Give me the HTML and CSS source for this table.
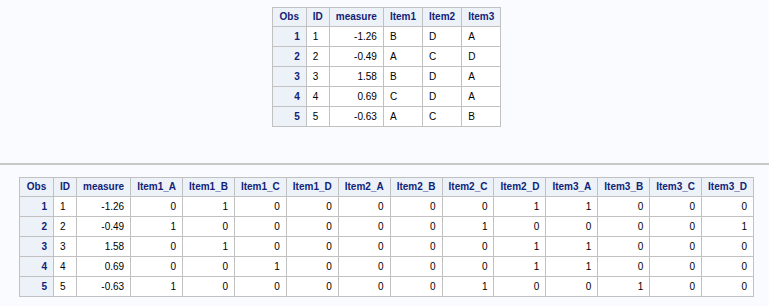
FILE: index.html
```html
<!DOCTYPE html>
<html>
<head>
<meta charset="utf-8">
<link rel="stylesheet" href="styles.css">
</head>
<body>
<div class="page">
  <section class="block block-top">
    <table class="tbl">
      <thead>
        <tr><th class="obs-h">Obs</th><th>ID</th><th>measure</th><th>Item1</th><th>Item2</th><th>Item3</th></tr>
      </thead>
      <tbody>
        <tr><th class="obs">1</th><td>1</td><td class="r">-1.26</td><td>B</td><td>D</td><td>A</td></tr>
        <tr><th class="obs">2</th><td>2</td><td class="r">-0.49</td><td>A</td><td>C</td><td>D</td></tr>
        <tr><th class="obs">3</th><td>3</td><td class="r">1.58</td><td>B</td><td>D</td><td>A</td></tr>
        <tr><th class="obs">4</th><td>4</td><td class="r">0.69</td><td>C</td><td>D</td><td>A</td></tr>
        <tr><th class="obs">5</th><td>5</td><td class="r">-0.63</td><td>A</td><td>C</td><td>B</td></tr>
      </tbody>
    </table>
  </section>
  <hr class="sep">
  <section class="block block-bottom">
    <table class="tbl">
      <thead>
        <tr><th class="obs-h">Obs</th><th>ID</th><th>measure</th><th>Item1_A</th><th>Item1_B</th><th>Item1_C</th><th>Item1_D</th><th>Item2_A</th><th>Item2_B</th><th>Item2_C</th><th>Item2_D</th><th>Item3_A</th><th>Item3_B</th><th>Item3_C</th><th>Item3_D</th></tr>
      </thead>
      <tbody>
        <tr><th class="obs">1</th><td>1</td><td class="r">-1.26</td><td class="r">0</td><td class="r">1</td><td class="r">0</td><td class="r">0</td><td class="r">0</td><td class="r">0</td><td class="r">0</td><td class="r">1</td><td class="r">1</td><td class="r">0</td><td class="r">0</td><td class="r">0</td></tr>
        <tr><th class="obs">2</th><td>2</td><td class="r">-0.49</td><td class="r">1</td><td class="r">0</td><td class="r">0</td><td class="r">0</td><td class="r">0</td><td class="r">0</td><td class="r">1</td><td class="r">0</td><td class="r">0</td><td class="r">0</td><td class="r">0</td><td class="r">1</td></tr>
        <tr><th class="obs">3</th><td>3</td><td class="r">1.58</td><td class="r">0</td><td class="r">1</td><td class="r">0</td><td class="r">0</td><td class="r">0</td><td class="r">0</td><td class="r">0</td><td class="r">1</td><td class="r">1</td><td class="r">0</td><td class="r">0</td><td class="r">0</td></tr>
        <tr><th class="obs">4</th><td>4</td><td class="r">0.69</td><td class="r">0</td><td class="r">0</td><td class="r">1</td><td class="r">0</td><td class="r">0</td><td class="r">0</td><td class="r">0</td><td class="r">1</td><td class="r">1</td><td class="r">0</td><td class="r">0</td><td class="r">0</td></tr>
        <tr><th class="obs">5</th><td>5</td><td class="r">-0.63</td><td class="r">1</td><td class="r">0</td><td class="r">0</td><td class="r">0</td><td class="r">0</td><td class="r">0</td><td class="r">1</td><td class="r">0</td><td class="r">0</td><td class="r">1</td><td class="r">0</td><td class="r">0</td></tr>
      </tbody>
    </table>
  </section>
</div>
</body>
</html>
```

FILE: styles.css
```css
html, body {
  margin: 0;
  padding: 0;
  background: #fafbfe;
}

.page {
  padding: 7px 8px 0 12px;
  font-family: "Liberation Sans", Arial, sans-serif;
  font-size: 10px;
}

.block {
  display: flex;
  justify-content: center;
}

.block-top {
  padding-bottom: 36px;
}

.block-bottom {
  padding-top: 12px;
}

.sep {
  border: 0;
  border-top: 2px solid #c8c8c8;
  margin: 0 -8px 0 -12px;
  height: 0;
}

.tbl {
  border-collapse: collapse;
  border: 1px solid #c1c1c1;
  background: #ffffff;
}

.tbl th,
.tbl td {
  border: 1px solid #c1c1c1;
  padding: 4px 6px 3px 6px;
  line-height: 12px;
  white-space: nowrap;
  color: #000000;
  text-align: left;
  font-weight: normal;
}

.tbl thead th {
  background: #edf2f9;
  color: #112277;
  font-weight: bold;
  text-align: center;
  padding: 3px 6px 3px 6px;
}

.tbl .obs-h {
  width: 21px;
}

.tbl th.obs {
  background: #edf2f9;
  color: #112277;
  font-weight: bold;
  text-align: right;
}

.tbl td.r {
  text-align: right;
}
```
